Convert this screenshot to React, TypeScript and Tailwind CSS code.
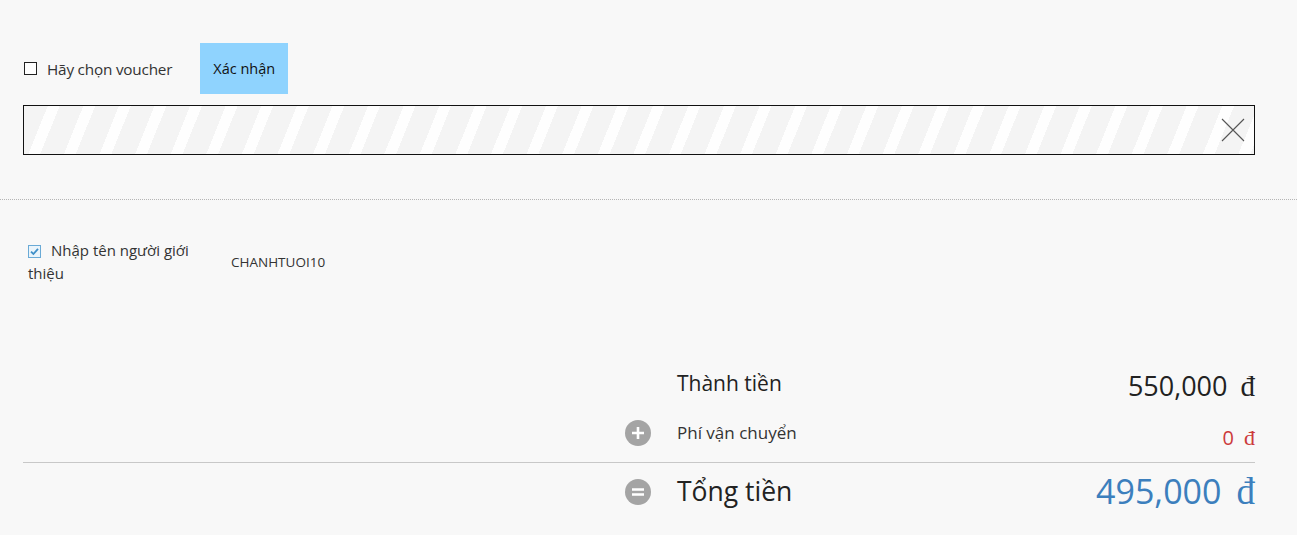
import React from "react";

const sans = { fontFamily: '"Open Sans", "Noto Sans", sans-serif' };

function Dong({ className = "" }: { className?: string }) {
  return (
    <span className={className} style={{ fontFamily: '"Liberation Serif", "DejaVu Serif", serif' }}>
      đ
    </span>
  );
}

export default function App() {
  return (
    <div className="min-h-[535px] w-full bg-[#f8f8f8] text-[#333]" style={sans}>
      {/* Voucher section */}
      <div className="pl-[23px] pr-[42px] pt-[43px]">
        <div className="flex items-center">
          <label className="flex items-center pl-[1px]">
            <span className="block h-[13px] w-[13px] border-[1.5px] border-[#222] bg-white" />
            <span className="relative top-[1px] ml-[10px] text-[15.3px] tracking-[-0.2px] text-[#333]">Hãy chọn voucher</span>
          </label>
          <button className="ml-[28px] flex h-[51px] w-[88px] items-center justify-center bg-[#8fd3fe] text-[14.5px] text-[#111]">
            Xác nhận
          </button>
        </div>
        <div className="mt-[11px] flex h-[50px] items-center justify-end border border-[#111] bg-[repeating-linear-gradient(112deg,#f4f4f4_0px,#f4f4f4_22px,#fefefe_22px,#fefefe_33px)] pr-[9px]">
          <svg width="24" height="24" viewBox="0 0 24 24">
            <path d="M1 1 L23 23 M23 1 L1 23" stroke="#555" strokeWidth="1.1" fill="none" />
          </svg>
        </div>
      </div>

      {/* Referrer section */}
      <div className="mt-[44px] border-t border-dotted border-[#b5b5b5] pl-[28px] pr-[42px] pt-[39px]">
        <div className="flex items-center">
          <div className="w-[190px] text-[15px] leading-[23px] text-[#333]">
            <span className="relative top-[1px] mr-[10px] inline-block h-[13px] w-[13px] align-[-1px]">
              <svg width="13" height="13" viewBox="0 0 13 13">
                <rect x="0.5" y="0.5" width="12" height="12" fill="#eaf4fb" stroke="#6aaad6" />
                <path d="M3 6.6 L5.4 9 L10 3.8" stroke="#3f8fc8" strokeWidth="1.8" fill="none" />
              </svg>
            </span>
            Nhập tên người giới thiệu
          </div>
          <div className="ml-[13px] text-[13.5px] text-[#333]">CHANHTUOI10</div>
        </div>
      </div>

      {/* Summary */}
      <div className="mt-[75px] pl-[23px] pr-[42px]">
        <div className="flex justify-end">
          <div className="w-[630px]">
            <div className="flex h-[48px] items-center">
              <div className="w-[52px]" />
              <div className="flex-1 text-[21px] text-[#222]">Thành tiền</div>
              <div className="relative top-[3px] flex items-baseline text-[27px] text-[#222]">
                <span>550,000</span>
                <Dong className="ml-[13px] text-[29px]" />
              </div>
            </div>
            <div className="flex h-[50px] items-center">
              <div className="w-[52px]">
                <span className="flex h-[26px] w-[26px] items-center justify-center rounded-full bg-[#a4a4a4]">
                  <svg width="14" height="14" viewBox="0 0 14 14">
                    <path d="M7 1 V13 M1 7 H13" stroke="#fff" strokeWidth="2.6" />
                  </svg>
                </span>
              </div>
              <div className="flex-1 text-[17px] text-[#333]">Phí vận chuyển</div>
              <div className="relative top-[4px] flex items-baseline text-[20px] text-[#cc3b3b]">
                <span>0</span>
                <Dong className="ml-[10px] text-[22px]" />
              </div>
            </div>
          </div>
        </div>
        <div className="mt-[4px] border-t border-[#c8c8c8]" />
        <div className="flex justify-end">
          <div className="flex h-[58px] w-[630px] items-center">
            <div className="w-[52px]">
              <span className="flex h-[26px] w-[26px] items-center justify-center rounded-full bg-[#a4a4a4]">
                <svg width="14" height="14" viewBox="0 0 14 14">
                  <path d="M1 4.5 H13 M1 9.5 H13" stroke="#fff" strokeWidth="2.6" />
                </svg>
              </span>
            </div>
            <div className="flex flex-1 items-baseline">
              <span className="text-[26.5px] text-[#222]">Tổng tiền</span>
            </div>
            <div className="flex items-baseline text-[34px] text-[#3c7fbd]">
              <span>495,000</span>
              <Dong className="ml-[15px] text-[37px]" />
            </div>
          </div>
        </div>
      </div>
    </div>
  );
}
